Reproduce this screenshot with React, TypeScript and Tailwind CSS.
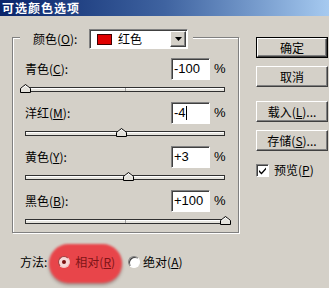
import React from "react";

const rows = [
  { label: "青色", key: "C", value: -100, text: "-100" },
  { label: "洋红", key: "M", value: -4, text: "-4", caret: true },
  { label: "黄色", key: "Y", value: 3, text: "+3" },
  { label: "黑色", key: "B", value: 100, text: "+100" },
];

function Thumb() {
  return (
    <svg width="11" height="9" viewBox="0 0 11 9" className="block">
      <path d="M5.5 0.5 L10.5 4.5 L10.5 8.5 L0.5 8.5 L0.5 4.5 Z" fill="#e4e2dc" stroke="#000" strokeWidth="1" />
      <path d="M1.5 4.9 L5.5 1.7 L9.5 4.9" fill="none" stroke="#fff" strokeWidth="1" />
    </svg>
  );
}

function Slider({ value }: { value: number }) {
  const left = ((value + 100) / 200) * 200 - 5;
  return (
    <div className="relative h-[18px]">
      <div className="absolute left-0 top-[7px] w-[200px] h-[5px] bg-[#e6e4de] border border-[#303030] shadow-[inset_0_1px_0_#fff]">
        <div className="absolute left-[99px] top-0 w-[1px] h-[3px] bg-[#a0a0a0]" />
      </div>
      <div className="absolute top-[4px]" style={{ left }}>
        <Thumb />
      </div>
    </div>
  );
}

function Button({ children, primary }: { children: React.ReactNode; primary?: boolean }) {
  return (
    <div className={`h-[21px] w-[72px] ${primary ? "border border-black" : ""}`}>
      <div className="h-full w-full flex items-center justify-center border border-t-white border-l-white border-b-[#404040] border-r-[#404040] shadow-[inset_-1px_-1px_0_#808080]">
        {children}
      </div>
    </div>
  );
}

export default function App() {
  return (
    <div className="w-[329px] h-[288px] overflow-hidden bg-[#d4d0c8] text-[12px] leading-[14px] text-black font-['Noto_Sans_CJK_SC','Noto_Sans',sans-serif]">
      <div className="h-[16px] pl-[2px] flex items-center bg-gradient-to-r from-[#0a246a] via-[#3f63a0] to-[#a6caf0] text-white font-bold text-[12px] leading-[14px] tracking-[1px]">
        可选颜色选项
      </div>

      <div className="flex">
        <div className="ml-[12px] w-[227px] pt-[13px]">
          <div className="relative z-10 ml-[8px] w-[173px] h-[20px] flex items-center bg-[#d4d0c8]">
            <span className="pl-[13px] w-[69px]">
              颜色(<u>O</u>):
            </span>
            <div className="w-[99px] h-[20px] bg-white border border-t-[#808080] border-l-[#808080] border-b-white border-r-white shadow-[inset_1px_1px_0_#404040] flex items-center pl-[7px]">
              <div className="w-[15px] h-[11px] bg-[#e00000] border border-[#400000]" />
              <span className="ml-[6px]">红色</span>
              <div className="ml-auto mr-[1px] w-[16px] h-[16px] flex items-center justify-center bg-[#d4d0c8] border border-t-white border-l-white border-b-[#404040] border-r-[#404040] shadow-[inset_-1px_-1px_0_#808080]">
                <svg width="7" height="4" viewBox="0 0 7 4">
                  <path d="M0 0 H7 L3.5 4 Z" fill="#000" />
                </svg>
              </div>
            </div>
          </div>

          <div className="-mt-[12px] h-[196px] border border-[#808080] shadow-[inset_1px_1px_0_#fff,1px_1px_0_#fff] pt-[20px] pl-[12px] pr-[12px] flex flex-col gap-[4px]">
            {rows.map((r) => (
              <div key={r.key}>
                <div className="h-[22px] flex items-center">
                  <span>
                    {r.label}(<u>{r.key}</u>):
                  </span>
                  <div className="ml-auto w-[39px] h-[22px] bg-white border border-t-[#808080] border-l-[#808080] border-b-white border-r-white shadow-[inset_1px_1px_0_#404040] flex items-center pl-[2px] font-['Liberation_Sans',sans-serif] text-[13px]">
                    {r.text}
                    {r.caret && <span className="inline-block w-[1px] h-[14px] bg-black" />}
                  </div>
                  <span className="ml-[4px] w-[12px] font-['Liberation_Sans',sans-serif] text-[13px]">%</span>
                </div>
                <Slider value={r.value} />
              </div>
            ))}
          </div>
        </div>

        <div className="ml-[17px] pt-[21px] flex flex-col">
          <Button primary>确定</Button>
          <div className="mt-[8px]">
            <Button>取消</Button>
          </div>
          <div className="mt-[14px]">
            <Button>
              载入(<u>L</u>)...
            </Button>
          </div>
          <div className="mt-[8px]">
            <Button>
              存储(<u>S</u>)...
            </Button>
          </div>
          <div className="mt-[12px] flex items-center">
            <div className="w-[13px] h-[13px] bg-white border border-t-[#808080] border-l-[#808080] border-b-white border-r-white shadow-[inset_1px_1px_0_#404040] flex items-center justify-center">
              <svg width="9" height="9" viewBox="0 0 9 9">
                <path d="M1 4 L3.5 6.5 L8 1.5 L8 3.5 L3.5 8.5 L1 6 Z" fill="#000" />
              </svg>
            </div>
            <span className="ml-[5px]">
              预览(<u>P</u>)
            </span>
          </div>
        </div>
      </div>

      <div className="relative mt-[19px] h-[20px] pl-[20px] flex items-center">
        <div className="absolute left-[49px] top-[-8px] w-[73px] h-[39px] rounded-full bg-[#e8454a] blur-[1px] shadow-[0_2px_3px_rgba(60,0,0,0.35)]" />
        <span className="relative">方法:</span>
        <div className="relative ml-[11px] w-[12px] h-[12px] rounded-full bg-[#f6d8d8] border border-t-[#a04040] border-l-[#a04040] border-b-[#f4c0c0] border-r-[#f4c0c0] flex items-center justify-center">
          <div className="w-[4px] h-[4px] rounded-full bg-[#7a1010]" />
        </div>
        <span className="relative ml-[5px] text-[#7d1416]">
          相对(<u>R</u>)
        </span>
        <div className="relative ml-[13px] w-[12px] h-[12px] rounded-full bg-white border border-t-[#808080] border-l-[#808080] border-b-white border-r-white shadow-[inset_1px_1px_0_#404040]" />
        <span className="relative ml-[3px]">
          绝对(<u>A</u>)
        </span>
      </div>
    </div>
  );
}
